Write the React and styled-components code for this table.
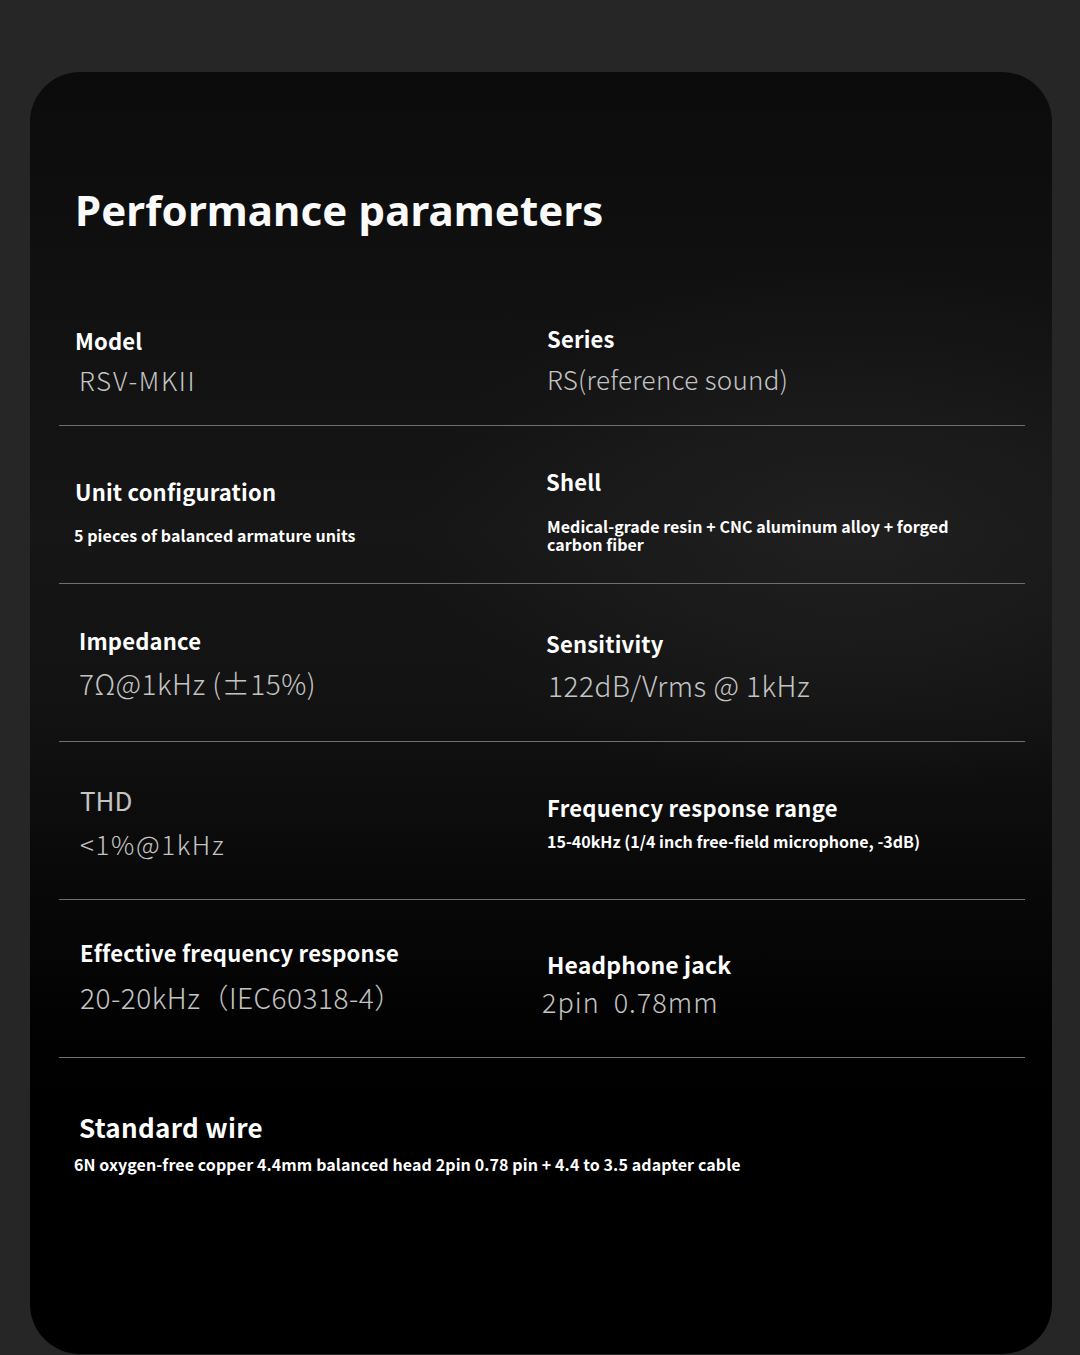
import React from "react";
import styled, { createGlobalStyle } from "styled-components";

const Global = createGlobalStyle`
  html, body { margin: 0; padding: 0; background: #262626; }
  body { overflow: hidden; }
  * { box-sizing: border-box; }
`;

const Page = styled.div`
  padding: 72px 28px 0 30px;
  height: 1355px;
`;

const Card = styled.section`
  height: 1282px;
  border-radius: 50px;
  padding: 117px 27px 0 29px;
  background:
    radial-gradient(ellipse 60% 30% at 80% 36%, rgba(44, 44, 44, 0.45), rgba(0, 0, 0, 0) 70%),
    linear-gradient(180deg, #0b0b0b 0%, #111111 18%, #161616 36%, #121212 50%, #080808 64%, #020202 74%, #000 82%, #000 100%);
`;

const Title = styled.h1`
  margin: 0;
  padding-left: 16px;
  font-family: "Noto Sans", "Open Sans", sans-serif;
  font-weight: 700;
  font-size: 42px;
  line-height: 41px;
  color: #fafafa;
  letter-spacing: 0.1px;
`;

const Row = styled.div`
  display: grid;
  grid-template-columns: 488px 1fr;
  height: ${(p) => p.$h}px;
  border-bottom: ${(p) => (p.$last ? "none" : "1px solid #6f6f6f")};
`;

const Cell = styled.div`
  display: flex;
  flex-direction: column;
  align-items: flex-start;
  padding-top: ${(p) => p.$top}px;
  padding-left: ${(p) => p.$x}px;
`;

const Label = styled.div`
  font-family: "Noto Sans CJK SC", "Noto Sans", sans-serif;
  font-weight: 700;
  font-size: ${(p) => p.$size || 22}px;
  line-height: ${(p) => p.$size || 22}px;
  letter-spacing: ${(p) => p.$ls || 0.2}px;
  color: #ffffff;
  white-space: nowrap;
  margin-left: ${(p) => p.$dx || 0}px;
`;

const Value = styled.div`
  font-family: "Noto Sans CJK SC", "Noto Sans", sans-serif;
  font-weight: ${(p) => p.$weight || 300};
  font-size: ${(p) => p.$size || 28}px;
  line-height: ${(p) => p.$size || 28}px;
  letter-spacing: ${(p) => p.$ls || 0}px;
  color: #c4c4c4;
  white-space: pre;
  margin-top: ${(p) => p.$gap || 0}px;
  margin-left: ${(p) => p.$dx || 0}px;
`;

const Sub = styled.div`
  font-family: "Noto Sans CJK SC", "Noto Sans", sans-serif;
  font-weight: 700;
  font-size: 16px;
  line-height: 17.5px;
  letter-spacing: ${(p) => p.$ls || 0}px;
  color: #ffffff;
  white-space: nowrap;
  margin-top: ${(p) => p.$gap || 0}px;
  margin-left: ${(p) => p.$dx || 0}px;
`;

export default function App() {
  return (
    <>
      <Global />
      <Page>
        <Card>
          <Title>Performance parameters</Title>

          <Row $h={196}>
            <Cell $top={99} $x={16}>
              <Label>Model</Label>
              <Value $size={26} $gap={16} $dx={4} $ls={1.7}>RSV-MKII</Value>
            </Cell>
            <Cell $top={97} $x={0}>
              <Label>Series</Label>
              <Value $size={26} $gap={17} $ls={0.3}>RS(reference sound)</Value>
            </Cell>
          </Row>

          <Row $h={158}>
            <Cell $top={54} $x={16}>
              <Label>Unit configuration</Label>
              <Sub $gap={25} $dx={-1} $ls={0.08}>5 pieces of balanced armature units</Sub>
            </Cell>
            <Cell $top={44} $x={0}>
              <Label $dx={-1}>Shell</Label>
              <Sub $gap={26} $ls={0.05}>
                Medical-grade resin + CNC aluminum alloy + forged
                <br />
                carbon fiber
              </Sub>
            </Cell>
          </Row>

          <Row $h={158}>
            <Cell $top={45} $x={20}>
              <Label>Impedance</Label>
              <Value $gap={18} $ls={0.5}>7Ω@1kHz (±15%)</Value>
            </Cell>
            <Cell $top={48} $x={0}>
              <Label $dx={-1}>Sensitivity</Label>
              <Value $gap={17} $dx={1} $ls={0.5}>122dB/Vrms @ 1kHz</Value>
            </Cell>
          </Row>

          <Row $h={158}>
            <Cell $top={45} $x={21}>
              <Value $size={26} $weight={400}>THD</Value>
              <Value $size={26} $gap={18} $ls={1.6}>&lt;1%@1kHz</Value>
            </Cell>
            <Cell $top={54} $x={0}>
              <Label $ls={0.28}>Frequency response range</Label>
              <Sub $gap={15}>15-40kHz (1/4 inch free-field microphone, -3dB)</Sub>
            </Cell>
          </Row>

          <Row $h={158}>
            <Cell $top={41} $x={21}>
              <Label>Effective frequency response</Label>
              <Value $gap={20} $ls={0.5}>20-20kHz（IEC60318-4）</Value>
            </Cell>
            <Cell $top={53} $x={0}>
              <Label $size={23} $ls={0.1}>Headphone jack</Label>
              <Value $size={27} $gap={12} $dx={-5} $ls={1}>{"2pin  0.78mm"}</Value>
            </Cell>
          </Row>

          <Row $h={200} $last>
            <Cell $top={56} $x={20}>
              <Label $size={26} $ls={0.3}>Standard wire</Label>
              <Sub $gap={16} $dx={-5} $ls={0.1}>
                6N oxygen-free copper 4.4mm balanced head 2pin 0.78 pin + 4.4 to 3.5 adapter cable
              </Sub>
            </Cell>
          </Row>
        </Card>
      </Page>
    </>
  );
}
